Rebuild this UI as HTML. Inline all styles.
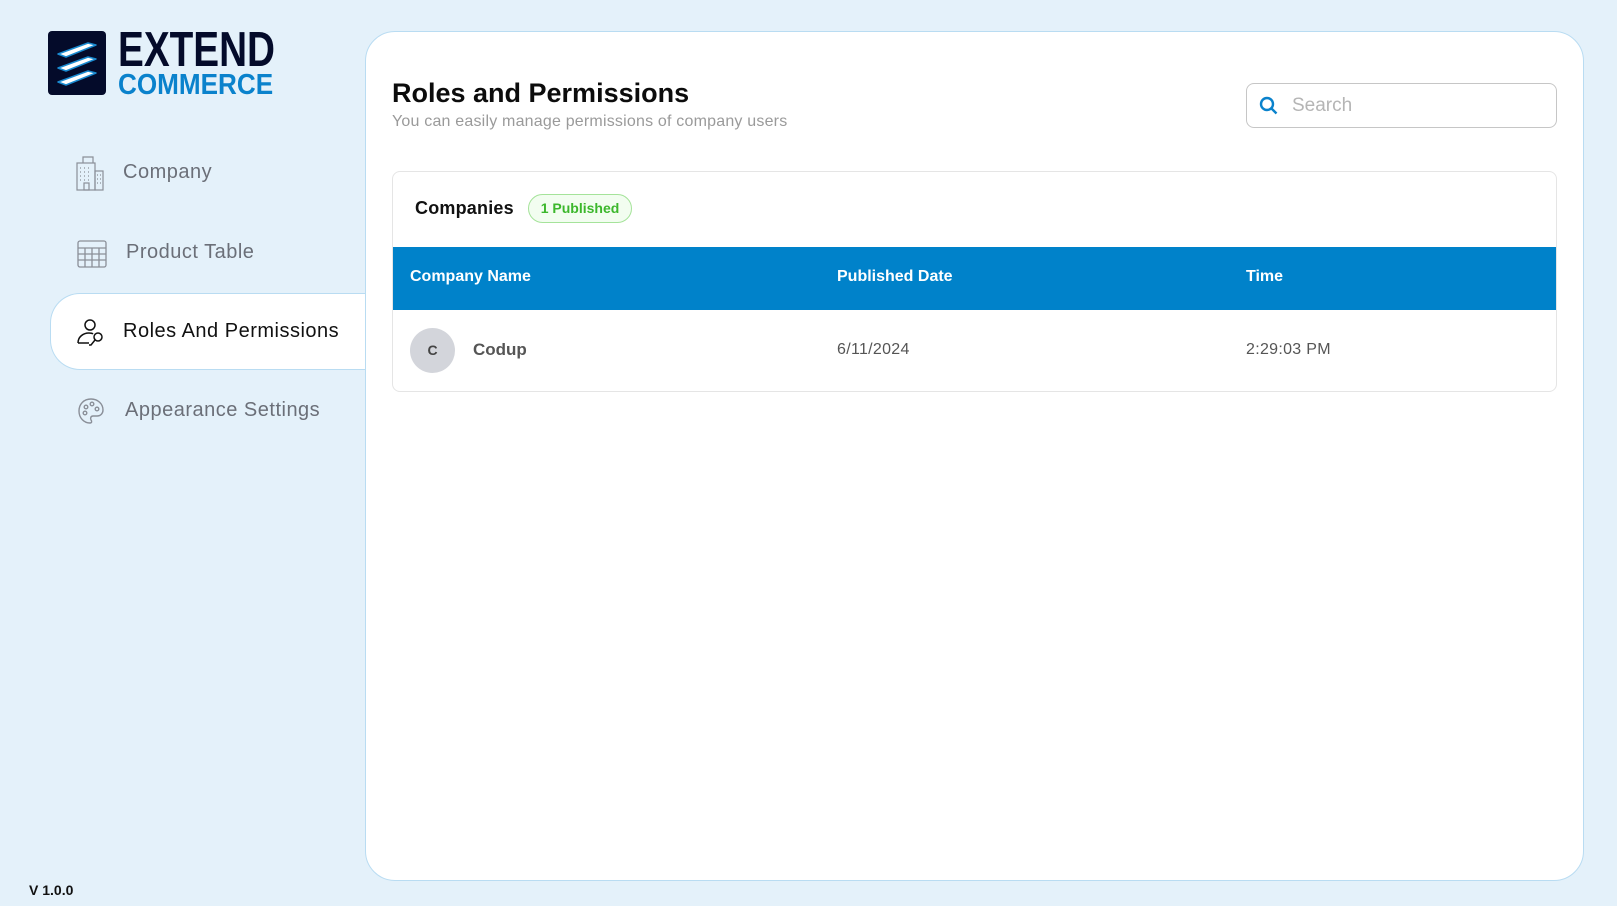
<!DOCTYPE html>
<html><head><meta charset="utf-8"><style>
*{box-sizing:border-box;margin:0;padding:0}
body{width:1617px;height:906px;background:#e4f1fa;font-family:"Liberation Sans",sans-serif;position:relative;overflow:hidden}
.abs{position:absolute}
.panel{left:365px;top:31px;width:1219px;height:850px;background:#fff;border:1px solid #b9dcf2;border-radius:30px}
.nav{left:76px;font-size:20px;color:#6b6f78;white-space:nowrap;letter-spacing:0.5px}
.active{left:50px;top:293px;width:330px;height:77px;background:#fff;border:1px solid #b9dcf2;border-right:none;border-radius:30px 0 0 30px}
</style></head><body>
<div class="abs" style="left:48px;top:31px;width:58px;height:64px;background:#040b2a;border-radius:4px">
<svg width="58" height="64" viewBox="0 0 58 64">
<g stroke-linejoin="round">
<path d="M10 23 L40 12 L48 14 L18 26 Z" fill="#fff" stroke="#1a8ad0" stroke-width="1.5"/>
<path d="M10 37 L40 26 L48 28 L18 40 Z" fill="#fff" stroke="#1a8ad0" stroke-width="1.5"/>
<path d="M10 51 L40 40 L48 42 L18 54 Z" fill="#fff" stroke="#1a8ad0" stroke-width="1.5"/>
</g></svg></div>
<div class="abs" style="left:118px;top:24px;font-size:49px;font-weight:bold;color:#040b2a;transform:scaleX(0.79);transform-origin:left;line-height:52px">EXTEND</div>
<div class="abs" style="left:118px;top:70px;font-size:29px;font-weight:bold;color:#0a82cc;transform:scaleX(0.9);transform-origin:left;line-height:30px">COMMERCE</div>

<div class="abs active"></div>
<svg class="abs" style="left:76px;top:155px" width="28" height="36" viewBox="0 0 28 36" fill="none" stroke="#8a8f98" stroke-width="1.2">
<rect x="1" y="8" width="18" height="27"/><path d="M7 8V2h10v6"/><rect x="19" y="16" width="8" height="19"/><rect x="8" y="28" width="5" height="7"/>
<path d="M4 13h2M8 13h2M12 13h2M4 17h2M8 17h2M12 17h2M4 21h2M8 21h2M12 21h2M4 25h2M8 25h2M12 25h2M21 20h1.5M24 20h1.5M21 24h1.5M24 24h1.5M21 28h1.5M24 28h1.5" stroke-dasharray="1 1"/></svg>
<div class="abs nav" style="left:123px;top:161px">Company</div>
<svg class="abs" style="left:77px;top:240px" width="30" height="28" viewBox="0 0 30 28" fill="none" stroke="#8a8f98" stroke-width="1.3">
<rect x="1" y="1" width="28" height="26" rx="2"/><path d="M1 8h28M1 14h28M1 20h28M8 8v19M15 8v19M22 8v19"/></svg>
<div class="abs nav" style="left:126px;top:241px">Product Table</div>
<svg class="abs" style="left:76px;top:318px" width="30" height="28" viewBox="0 0 30 28" fill="none" stroke="#111" stroke-width="1.5">
<circle cx="14" cy="7" r="5"/><path d="M2 25c0-6 5-10 11-10 2 0 3 0 4 1"/><path d="M2 25h11"/><circle cx="22" cy="19" r="4"/><path d="M19 22l-4 5h-2"/></svg>
<div class="abs nav" style="left:123px;top:320px;color:#111">Roles And Permissions</div>
<svg class="abs" style="left:77px;top:397px" width="28" height="28" viewBox="0 0 28 28" fill="none" stroke="#8a8f98" stroke-width="1.4">
<path d="M14 2C7 2 2 7 2 14s5 12 11 12c2 0 2-2 1-3-1-2 0-4 2-4h4c4 0 6-3 6-6C26 7 21 2 14 2z"/><circle cx="9" cy="10" r="1.8"/><circle cx="15" cy="7" r="1.8"/><circle cx="20" cy="12" r="1.8"/><circle cx="8" cy="16" r="1.8"/></svg>
<div class="abs nav" style="left:125px;top:399px">Appearance Settings</div>
<div class="abs" style="left:29px;top:882px;font-size:14px;font-weight:bold;color:#111">V 1.0.0</div>

<div class="abs panel"></div>
<div class="abs" style="left:392px;top:78px;font-size:27px;font-weight:bold;color:#0c0c0c">Roles and Permissions</div>
<div class="abs" style="left:392px;top:113px;font-size:16px;color:#9a9a9a;letter-spacing:0.2px">You can easily manage permissions of company users</div>
<div class="abs" style="left:1246px;top:83px;width:311px;height:45px;border:1px solid #c6c6c6;border-radius:8px"></div>
<svg class="abs" style="left:1259px;top:96px" width="20" height="20" viewBox="0 0 20 20" fill="none" stroke="#0a82cc" stroke-width="2.4"><circle cx="8" cy="8" r="6"/><path d="M12.5 12.5l5 5"/></svg>
<div class="abs" style="left:1292px;top:95px;font-size:19px;color:#b5b5b5">Search</div>

<div class="abs" style="left:392px;top:171px;width:1165px;height:221px;border:1px solid #e5e5e5;border-radius:8px;overflow:hidden">
<div class="abs" style="left:0;top:75px;width:1165px;height:63px;background:#0082ca"></div>
</div>
<div class="abs" style="left:415px;top:198px;font-size:18px;font-weight:bold;color:#111;letter-spacing:0.2px">Companies</div>
<div class="abs" style="left:528px;top:194px;width:104px;height:29px;border:1px solid #a5e39a;background:#f2fdf0;border-radius:15px;font-size:14px;font-weight:bold;color:#3cb72c;text-align:center;line-height:27px">1 Published</div>
<div class="abs" style="left:410px;top:268px;font-size:16px;font-weight:bold;color:#fff">Company Name</div>
<div class="abs" style="left:837px;top:268px;font-size:16px;font-weight:bold;color:#fff">Published Date</div>
<div class="abs" style="left:1246px;top:268px;font-size:16px;font-weight:bold;color:#fff">Time</div>
<div class="abs" style="left:410px;top:328px;width:45px;height:45px;border-radius:50%;background:#d3d5db;text-align:center;line-height:45px;font-size:14px;font-weight:bold;color:#444">C</div>
<div class="abs" style="left:473px;top:340px;font-size:17px;font-weight:bold;color:#555">Codup</div>
<div class="abs" style="left:837px;top:341px;font-size:16px;color:#555;letter-spacing:0.3px">6/11/2024</div>
<div class="abs" style="left:1246px;top:341px;font-size:16px;color:#555;letter-spacing:0.3px">2:29:03 PM</div>
</body></html>
